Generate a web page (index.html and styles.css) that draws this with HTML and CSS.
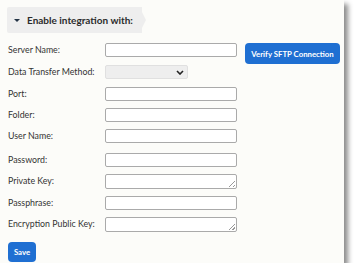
FILE: index.html
```html
<!DOCTYPE html>
<html>
<head>
<meta charset="utf-8">
<link rel="stylesheet" href="styles.css">
</head>
<body>
<div class="panel">
  <div class="tab">
    <span class="caret"></span>
    <span class="tab-title">Enable integration with:</span>
  </div>
  <div class="form">
    <label class="lbl r1">Server Name:</label>
    <input class="inp r1" type="text">
    <button class="btn verify r1">Verify SFTP Connection</button>

    <label class="lbl r2">Data Transfer Method:</label>
    <div class="sel r2"><svg width="8" height="5" viewBox="0 0 8 5"><path d="M1 1 L4 4 L7 1" fill="none" stroke="#222" stroke-width="1.6"/></svg></div>

    <label class="lbl r3">Port:</label>
    <input class="inp r3" type="text">

    <label class="lbl r4">Folder:</label>
    <input class="inp r4" type="text">

    <label class="lbl r5">User Name:</label>
    <input class="inp r5" type="text">

    <label class="lbl r6">Password:</label>
    <input class="inp r6" type="text">

    <label class="lbl r7">Private Key:</label>
    <div class="ta r7"><span class="grip"></span></div>

    <label class="lbl r8">Passphrase:</label>
    <input class="inp r8" type="text">

    <label class="lbl r9">Encryption Public Key:</label>
    <div class="ta r9"><span class="grip"></span></div>
  </div>
  <button class="btn save">Save</button>
</div>
</body>
</html>
```
FILE: styles.css
```css
html, body { margin: 0; padding: 0; background: #ffffff; }
body { font-family: Lato, "Open Sans", sans-serif; color: #333; }
.panel {
  width: 344px;
  height: 263px;
  background: #fcfcf9;
  box-shadow: 4px 4px 5px rgba(0,0,0,0.45);
  padding: 7px 0 0 8px;
  box-sizing: border-box;
  position: relative;
}
.tab {
  position: relative;
  width: 135px;
  height: 26px;
  margin-left: -1px;
  background: #eeeeee;
  border-radius: 2px 0 0 2px;
  display: flex;
  align-items: center;
  padding-left: 7px;
  box-sizing: border-box;
}
.tab::after {
  content: "";
  position: absolute;
  right: -4px;
  top: 5px;
  border-top: 8px solid transparent;
  border-bottom: 8px solid transparent;
  border-left: 4px solid #eeeeee;
}
.caret {
  width: 0; height: 0;
  border-left: 3px solid transparent;
  border-right: 3px solid transparent;
  border-top: 3px solid #234;
  margin-right: 7px;
  margin-top: 1px;
}
.tab-title { font-weight: 700; font-size: 10px; color: #2b2b2b; }
.form {
  margin-top: 10px;
  display: grid;
  grid-template-columns: 89px 132px 95px;
  column-gap: 8px;
  grid-template-rows: 22px 22px 21px 21px 24px 21px 22px 21px 15px;
  align-items: start;
}
.lbl { grid-column: 1; font-size: 8.8px; color: #333; line-height: 13px; }
.r1 { grid-row: 1; } .r2 { grid-row: 2; } .r3 { grid-row: 3; } .r4 { grid-row: 4; }
.r5 { grid-row: 5; } .r6 { grid-row: 6; } .r7 { grid-row: 7; } .r8 { grid-row: 8; } .r9 { grid-row: 9; }
.inp {
  grid-column: 2;
  height: 14px;
  margin: 0;
  padding: 0;
  border: 1px solid #aaaaaa;
  border-radius: 2px;
  background: #fff;
  box-sizing: border-box;
}
.sel {
  grid-column: 2;
  width: 83px;
  height: 14px;
  background: #eeeeee;
  border: 1px solid #e0e0e0;
  border-radius: 2px;
  box-sizing: border-box;
  display: flex;
  align-items: center;
  justify-content: flex-end;
  padding-right: 3px;
}
.sel svg { display: block; }
.ta {
  grid-column: 2;
  height: 15px;
  border: 1px solid #aaaaaa;
  border-radius: 2px;
  background: #fff;
  box-sizing: border-box;
  position: relative;
}
.grip {
  position: absolute;
  right: 1px; bottom: 1px;
  width: 6px; height: 6px;
  background: linear-gradient(135deg, transparent 45%, #999 45%, #999 55%, transparent 55%, transparent 75%, #999 75%, #999 85%, transparent 85%);
}
.btn {
  font-family: Lato, "Open Sans", sans-serif;
  font-weight: 700;
  color: #fff;
  background: #1f6fd2;
  border: none;
  border-radius: 4px;
  font-size: 7.8px;
  padding: 0;
}
.verify {
  grid-column: 3;
  height: 21px;
  width: 95px;
}
.save {
  margin-top: 10px;
  width: 28px;
  height: 20px;
}
```
